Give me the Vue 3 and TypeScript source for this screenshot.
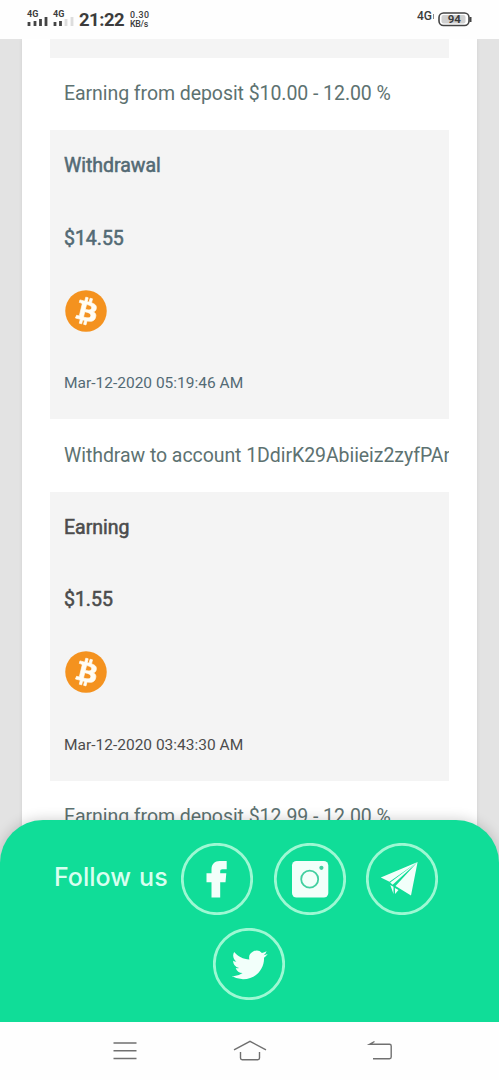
<script setup lang="ts">
interface Transaction {
  kind: string
  amount: string
  date: string
  note: string
  tone: 'slate' | 'dark'
}

const transactions: Transaction[] = [
  { kind: 'Withdrawal', amount: '$14.55', date: 'Mar-12-2020 05:19:46 AM', note: 'Withdraw to account 1DdirK29Abiieiz2zyfPAr', tone: 'slate' },
  { kind: 'Earning', amount: '$1.55', date: 'Mar-12-2020 03:43:30 AM', note: 'Earning from deposit $12.99 - 12.00 %', tone: 'dark' },
]
</script>

<template>
  <div class="phone">
    <header class="status">
      <div class="signal">
        <span>4G</span>
        <svg width="21" height="10" viewBox="0 0 21 10"><path d="M2 5v4M8 4v5M13.500 2v7M19 0v9" stroke="#444" stroke-width="2.800" /></svg>
      </div>
      <div class="signal second">
        <span>4G</span>
        <svg width="21" height="10" viewBox="0 0 21 10"><path d="M2 5v4M7.500 4v5" stroke="#444" stroke-width="2.800" /><path d="M13 2v7M19 0v9" stroke="#ddd" stroke-width="2.800" /></svg>
      </div>
      <div class="clock">21:22</div>
      <div class="rate"><span>0.30</span><span>KB/s</span></div>
      <div class="net">4G<i></i></div>
      <svg class="battery" width="35" height="15" viewBox="0 0 35 15">
        <rect x="1" y="1" width="30" height="12.500" rx="4.500" fill="#fff" stroke="#444" stroke-width="1.600" />
        <rect x="3.500" y="3" width="24" height="8.500" rx="2" fill="#d0d0d0" />
        <path d="M32.500 5v5" stroke="#444" stroke-width="2" />
        <text x="16.300" y="11.300" text-anchor="middle" font-size="11.500" font-weight="700" fill="#3c3c3c">94</text>
      </svg>
    </header>

    <main class="page">
      <div class="sheet">
        <div class="table">
          <div class="previous"></div>
          <div class="row note">Earning from deposit $10.00 - 12.00 %</div>
          <template v-for="item in transactions" :key="item.date">
            <section class="entry" :class="item.tone">
              <div class="row strong">{{ item.kind }}</div>
              <div class="row strong">{{ item.amount }}</div>
              <div class="row">
                <svg class="coin" width="42" height="42" viewBox="0 0 32 32">
                  <circle cx="16" cy="16" r="15.800" fill="#f4921f" />
                  <path transform="translate(-.7 -.9) scale(1.060)" fill="#fffdf5" stroke="#fffdf5" stroke-width=".5" fill-rule="evenodd" d="M23.189 14.02c.314-2.096-1.283-3.223-3.465-3.975l.708-2.84-1.728-.43-.69 2.765c-.454-.114-.92-.22-1.385-.326l.695-2.783L15.596 6l-.708 2.839c-.376-.086-.746-.17-1.104-.26l.002-.009-2.384-.595-.46 1.846s1.283.294 1.256.312c.7.175.826.638.805 1.006l-.806 3.235c.048.012.11.03.18.057l-.183-.045-1.13 4.532c-.086.212-.303.531-.793.41.018.025-1.256-.313-1.256-.313l-.858 1.978 2.25.561c.418.105.828.215 1.231.318l-.715 2.872 1.727.43.708-2.84c.472.127.93.245 1.378.357l-.706 2.828 1.728.43.715-2.866c2.948.558 5.164.333 6.097-2.333.752-2.146-.037-3.385-1.588-4.192 1.13-.26 1.98-1.003 2.207-2.538zm-3.95 5.538c-.533 2.147-4.148.986-5.32.695l.95-3.805c1.172.293 4.929.872 4.37 3.11zm.535-5.569c-.487 1.953-3.495.96-4.47.717l.86-3.45c.975.243 4.118.696 3.61 2.733z" />
                </svg>
              </div>
              <div class="row date">{{ item.date }}</div>
            </section>
            <div class="row note">{{ item.note }}</div>
          </template>
        </div>
      </div>

      <footer class="follow">
        <div class="line">
          <span class="label">Follow us</span>
          <svg class="social" viewBox="0 0 72 72">
            <circle cx="36" cy="36" r="34.700" />
            <path d="M30.500 54.500V39.300h-5v-9h5v-4.100c0-5 3.200-8.200 8.200-8.200h7v8.200h-4.300c-1.600 0-2.200.8-2.200 2.200v1.900h6.100l-.8 9h-5.300v15.200z" />
          </svg>
          <svg class="social" viewBox="0 0 72 72">
            <circle cx="36" cy="36" r="34.700" />
            <rect x="18" y="18" width="36.300" height="36.500" rx="4.500" />
            <g class="detail"><circle class="lens" cx="35.700" cy="36.200" r="8.500" /><circle class="dot" cx="47.400" cy="24.800" r="2.100" /></g>
          </svg>
          <svg class="social" viewBox="0 0 72 72">
            <circle cx="36" cy="36" r="34.700" />
            <path d="M51.600 19L14.800 34.500l8.700 4.200zM51.600 19L24.200 39.600l2.400 2.200zM51.600 19L29.500 43l15.500 9.400zM24.300 42l3.200 1.700v7.400zM28.900 45l3.600 2-3.400 4z" />
          </svg>
        </div>
        <svg class="social bird" viewBox="0 0 72 72">
          <circle cx="36" cy="36" r="34.700" />
          <path transform="translate(18.700 19.300) scale(1.500 1.470)" d="M23.953 4.57a10 10 0 01-2.825.775 4.958 4.958 0 002.163-2.723c-.951.555-2.005.959-3.127 1.184a4.92 4.92 0 00-8.384 4.482C7.69 8.095 4.067 6.13 1.64 3.162a4.822 4.822 0 00-.666 2.475c0 1.71.87 3.213 2.188 4.096a4.904 4.904 0 01-2.228-.616v.06a4.923 4.923 0 003.946 4.827 4.996 4.996 0 01-2.212.085 4.936 4.936 0 004.604 3.417 9.867 9.867 0 01-6.102 2.105c-.39 0-.779-.023-1.17-.067a13.995 13.995 0 007.557 2.209c9.053 0 13.998-7.496 13.998-13.985 0-.21 0-.42-.015-.63A9.935 9.935 0 0024 4.59z" />
        </svg>
      </footer>
    </main>

    <nav class="keys">
      <svg width="32" height="24" viewBox="0 0 32 24"><path d="M4.500 4h23M4.500 11.800h23M4.500 19.500h23" /></svg>
      <svg class="home" width="36" height="24" viewBox="0 0 36 24"><path d="M2 10.800L18 2.300l16 8.500M8.500 13v6c0 1 .6 1.700 1.700 1.700h15.600c1.100 0 1.700-.7 1.700-1.700v-6" /></svg>
      <svg width="32" height="24" viewBox="0 0 32 24"><path d="M10.500 2.500L5.500 5.300h20c1.200 0 1.700.6 1.700 1.700v11c0 1.100-.6 1.700-1.700 1.700H9" /></svg>
    </nav>
  </div>
</template>

<style>
body { margin: 0; overflow: hidden; }
</style>

<style scoped>
.phone {
  width: 499px;
  height: 1080px;
  display: flex;
  flex-direction: column;
  overflow: hidden;
  background: #fefefe;
  font-family: Roboto, "Liberation Sans", sans-serif;
}
svg { display: block; flex: none; }
.status {
  height: 39px;
  flex: none;
  display: flex;
  align-items: flex-start;
  padding: 0 28px 0 27px;
  box-sizing: border-box;
  color: #3c3c3c;
}
.signal { width: 21px; margin: 9px 5px 0 0; }
.signal span { display: block; height: 8px; font-size: 9px; line-height: 10px; font-weight: 700; }
.signal.second { margin-right: 5px; }
.clock { width: 51px; margin-top: 9px; font-size: 18.5px; line-height: 22px; font-weight: 700; letter-spacing: -.5px; white-space: nowrap; }
.rate {
  display: flex;
  flex-direction: column;
  font-size: 8.8px;
  line-height: 9px;
  font-weight: 500;
  margin-top: 11px;
}
.rate span:first-child { letter-spacing: .5px; }
.rate span:last-child { letter-spacing: -.3px; }
.net { margin: 10px 4px 0 auto; font-size: 12px; line-height: 13px; font-weight: 500; display: flex; align-items: center; }
.net i { width: 1px; height: 5px; margin-left: 1px; background: #888; }
.battery { margin: 12px -2px 0 0; }
.page {
  position: relative;
  height: 983px;
  flex: none;
  overflow: hidden;
  background: #e3e3e3;
}
.sheet {
  margin: 0 22px;
  height: 983px;
  padding: 0 28px;
  box-sizing: border-box;
  background: #fff;
  box-shadow: 0 0 4px rgba(0, 0, 0, .08);
}
.table { width: 399px; overflow: hidden; }
.previous { height: 19px; background: #f4f4f4; }
.row {
  height: 72.3px;
  padding: 0 0 .5px 14px;
  display: flex;
  align-items: center;
  box-sizing: border-box;
  white-space: nowrap;
}
.note { color: #5d7271; font-size: 19.5px; letter-spacing: -.065px; }
.entry { background: #f4f4f4; }
.slate { color: #536a74; }
.dark { color: #4c4c4c; }
.strong { font-size: 19.5px; letter-spacing: -.03px; padding-bottom: 1.2px; -webkit-text-stroke: .55px currentColor; }
.date { font-size: 15.5px; padding-bottom: 0; }
.coin { margin-left: 1px; }
.follow {
  position: absolute;
  left: 0;
  right: 0;
  bottom: 0;
  height: 202px;
  padding-top: 23px;
  box-sizing: border-box;
  border-radius: 43px 43px 0 0;
  background: #10dd98;
  box-shadow: 0 0 14px rgba(0, 0, 0, .2);
  display: flex;
  flex-direction: column;
  align-items: center;
  gap: 13px;
}
.line { width: 384px; display: flex; gap: 20.5px; margin-right: 7px; }
.label {
  width: 106.5px;
  color: #d9fff0;
  font-family: Inter, sans-serif;
  font-size: 25px;
  font-weight: 500;
  line-height: 68px;
  word-spacing: 1.5px;
  white-space: nowrap;
}
.social { width: 72px; height: 72px; fill: #f2fffa; }
.social > circle { fill: none; stroke: #9df8d3; stroke-width: 2.8; }
.bird { margin-right: 1px; }
.detail .lens { fill: none; stroke: #42cfa0; stroke-width: 1.8; }
.detail .dot { fill: #42cfa0; }
.keys {
  height: 58px;
  flex: none;
  padding: 17px 103px 0 109px;
  box-sizing: border-box;
  display: flex;
  justify-content: space-between;
}
.keys svg { fill: none; stroke: #707070; stroke-width: 1.4; }
.keys .home { margin: 0 6px 0 0; }
</style>
